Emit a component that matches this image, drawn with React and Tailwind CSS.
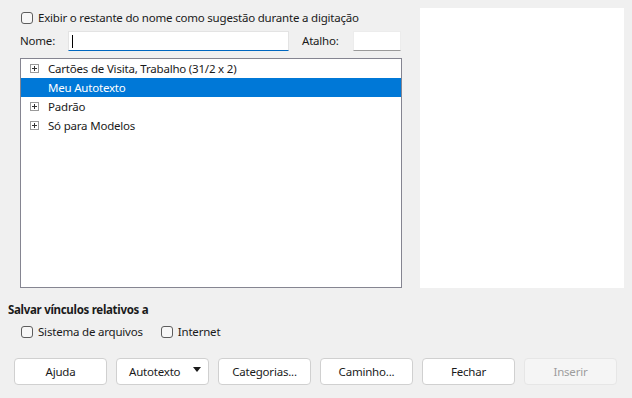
import React from "react";

const font = { fontFamily: '"Noto Sans", "Open Sans", sans-serif' };

function CheckBox({ label }) {
  return (
    <label className="flex items-center h-[18px] gap-[5px] text-[11.5px] tracking-[-0.2px] text-[#1a1a1a]">
      <span className="block h-[12px] w-[12px] rounded-[3px] border border-[#5d5d5d] bg-[#f7f7f7]" />
      <span>{label}</span>
    </label>
  );
}

function Expander() {
  return (
    <svg width="9" height="9" viewBox="0 0 9 9" className="block">
      <rect x="0.5" y="0.5" width="8" height="8" fill="#fff" stroke="#9a9a9a" />
      <path d="M2 4.5h5M4.5 2v5" stroke="#333" strokeWidth="1" />
    </svg>
  );
}

const rows = [
  { label: "Cartões de Visita, Trabalho (31/2 x 2)", expandable: true },
  { label: "Meu Autotexto", selected: true },
  { label: "Padrão", expandable: true },
  { label: "Só para Modelos", expandable: true },
];

const buttons = ["Ajuda", "Autotexto", "Categorias...", "Caminho...", "Fechar", "Inserir"];

export default function App() {
  return (
    <div
      className="w-[632px] h-[398px] bg-[#f0f0f0] pt-2 px-2 overflow-hidden text-[11.5px] tracking-[-0.2px] text-[#1a1a1a]"
      style={font}
    >
      <div className="flex">
        <div className="ml-3 w-[382px]">
          <div className="pt-[1px] pl-[1px]">
            <CheckBox label="Exibir o restante do nome como sugestão durante a digitação" />
          </div>

          <div className="mt-1 flex items-center h-[20px]">
            <span className="w-[48px]">Nome:</span>
            <div className="relative h-[20px] w-[221px] bg-white border border-[#e3e3e3] border-b-[#0067c0]">
              <span className="absolute left-[3px] top-[3px] h-[13px] w-px bg-black" />
            </div>
            <span className="ml-[13px] w-[51px]">Atalho:</span>
            <div className="h-[20px] w-[48px] bg-white border border-[#ececec] border-b-[#9a9a9a]" />
          </div>

          <div className="mt-[7px] h-[230px] border border-[#858591] bg-white">
            {rows.map((r) => (
              <div
                key={r.label}
                className={`flex items-center h-[19px] pl-[9px] ${
                  r.selected ? "bg-[#0078d7] text-white" : "text-[#1a1a1a]"
                }`}
              >
                <span className="w-[18px] flex items-center">
                  {r.expandable && <Expander />}
                </span>
                <span>{r.label}</span>
              </div>
            ))}
          </div>
        </div>

        <div className="ml-[18px] h-[280px] w-[204px] bg-white" />
      </div>

      <div className="mt-[14px] h-[16px] leading-[16px] font-bold tracking-[-0.3px]">
        Salvar vínculos relativos a
      </div>

      <div className="mt-[5px] ml-[13px] flex gap-[18px]">
        <CheckBox label="Sistema de arquivos" />
        <CheckBox label="Internet" />
      </div>

      <div className="mt-[17px] ml-[6px] flex gap-[9px]">
        {buttons.map((b) => {
          const disabled = b === "Inserir";
          if (b === "Autotexto") {
            return (
              <button
                key={b}
                className="h-[27px] w-[93px] rounded-[4px] border border-[#d0d0d0] bg-white flex items-center justify-between pl-[12px] pr-[7px] text-[#1a1a1a]"
              >
                <span>{b}</span>
                <svg width="8" height="5" viewBox="0 0 8 5" className="mb-[4px]">
                  <path d="M0 0h8L4 5z" fill="#1a1a1a" />
                </svg>
              </button>
            );
          }
          return (
            <button
              key={b}
              className={`h-[27px] w-[93px] rounded-[4px] border flex items-center justify-center ${
                disabled
                  ? "border-[#e6e6e6] bg-[#f5f5f5] text-[#9d9d9d]"
                  : "border-[#d0d0d0] bg-white text-[#1a1a1a]"
              }`}
            >
              {b}
            </button>
          );
        })}
      </div>
    </div>
  );
}
